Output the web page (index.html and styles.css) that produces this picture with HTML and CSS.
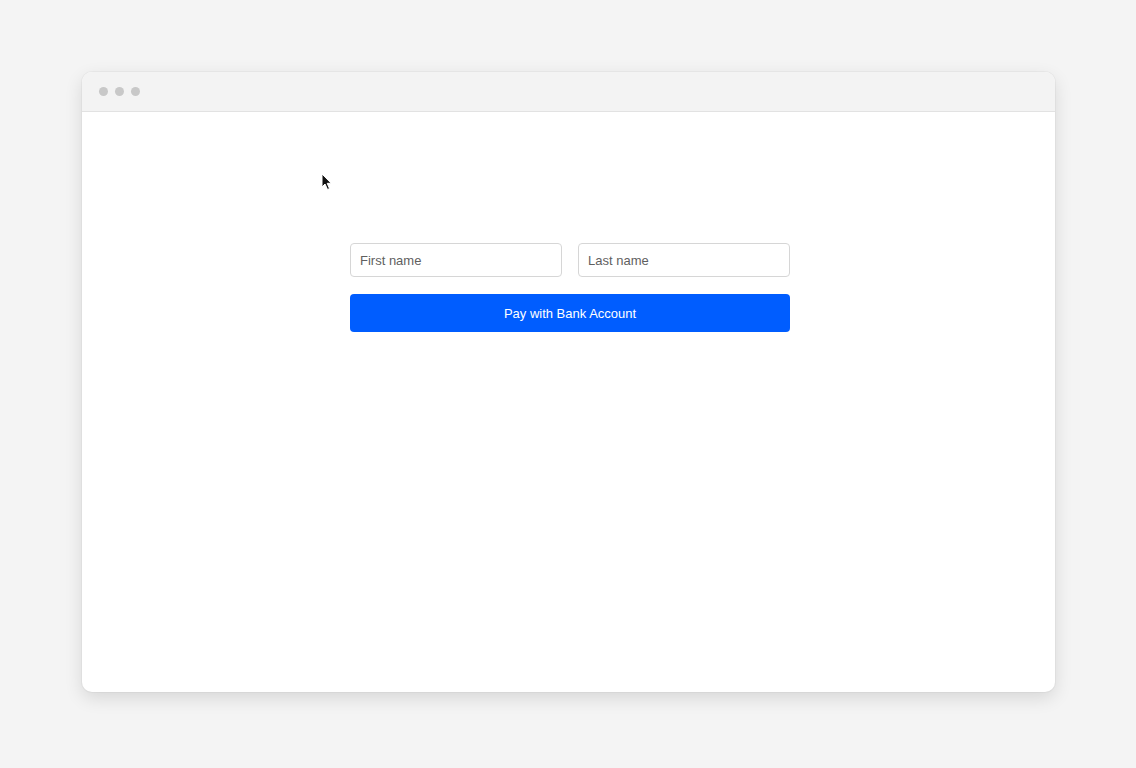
FILE: index.html
```html
<!DOCTYPE html>
<html>
<head>
<meta charset="utf-8">
<link rel="stylesheet" href="styles.css">
</head>
<body>
<div class="stage">
  <div class="window">
    <div class="titlebar">
      <span class="dot"></span><span class="dot"></span><span class="dot"></span>
    </div>
    <div class="content">
      <svg class="cursor" width="12" height="18" viewBox="0 0 12 18"><path d="M1 1 L1 14 L4 11 L6.5 16.5 L8.5 15.6 L6.2 10.3 L10.2 10.3 Z" fill="#111" stroke="#fff" stroke-width="1"/></svg>
      <form class="form">
        <div class="row">
          <input class="field" type="text" placeholder="First name">
          <input class="field" type="text" placeholder="Last name">
        </div>
        <button class="pay" type="button">Pay with Bank Account</button>
      </form>
    </div>
  </div>
</div>
</body>
</html>
```
FILE: styles.css
```css
* { box-sizing: border-box; }
html, body { margin: 0; padding: 0; }
body {
  background: #f4f4f4;
  font-family: "Liberation Sans", Arial, sans-serif;
  width: 1136px;
  height: 768px;
  overflow: hidden;
}
.stage {
  padding: 72px 0 0 82px;
}
.window {
  width: 973px;
  height: 620px;
  background: #fff;
  border-radius: 10px;
  box-shadow: 0 6px 18px rgba(0,0,0,0.12), 0 0 0 1px rgba(0,0,0,0.03);
  overflow: hidden;
  display: flex;
  flex-direction: column;
}
.titlebar {
  height: 40px;
  background: #f3f3f3;
  border-bottom: 1px solid #e2e2e2;
  display: flex;
  align-items: center;
  gap: 7px;
  padding-left: 17px;
  flex: none;
}
.dot {
  width: 9px;
  height: 9px;
  border-radius: 50%;
  background: #c8c8c8;
}
.content {
  position: relative;
  flex: 1;
  padding-top: 131px;
}
.cursor {
  position: absolute;
  left: 239px;
  top: 61px;
}
.form {
  width: 440px;
  margin: 0 0 0 268px;
  display: flex;
  flex-direction: column;
  gap: 17px;
}
.row {
  display: flex;
  gap: 16px;
}
.field {
  flex: 1;
  width: 0;
  height: 34px;
  border: 1px solid #d6d6d6;
  border-radius: 4px;
  padding: 0 9px;
  font-family: "Liberation Sans", Arial, sans-serif;
  font-size: 13px;
  color: #333;
  background: #fff;
  outline: none;
}
.field::placeholder { color: #5f5f5f; }
.pay {
  height: 38px;
  border: none;
  border-radius: 4px;
  background: #005dff;
  color: #fff;
  font-family: "Liberation Sans", Arial, sans-serif;
  font-size: 13px;
  cursor: pointer;
}
```
